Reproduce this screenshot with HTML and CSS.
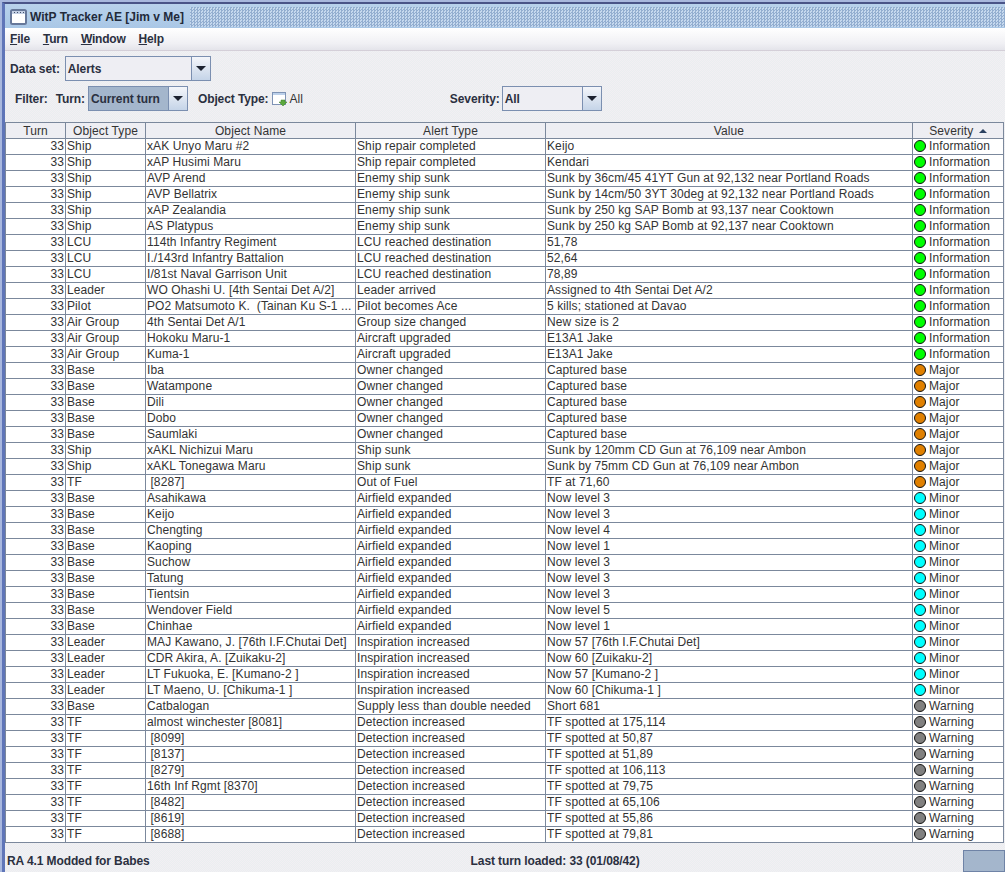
FILE: index.html
```html
<!DOCTYPE html>
<html lang="en">
<head>
<meta charset="utf-8">
<title>WitP Tracker AE</title>
<link rel="stylesheet" href="styles.css">
</head>
<body>
<div class="window">
  <div class="titlebar">
    <svg class="appicon" width="17" height="16" viewBox="0 0 17 16"><rect x="1" y="1" width="15" height="14" rx="1.5" fill="#fff" stroke="#66789a" stroke-width="2"/><rect x="2" y="2" width="13" height="3" fill="#c4d0e4"/><path d="M4 3.5h1M7 3.5h1M10 3.5h1M13 3.5h1" stroke="#3f4d68"/></svg>
    <span class="titletext">WitP Tracker AE [Jim v Me]</span>
    <span class="titledots"></span>
  </div>
  <div class="menubar">
    <span class="menu"><u>F</u>ile</span>
    <span class="menu"><u>T</u>urn</span>
    <span class="menu"><u>W</u>indow</span>
    <span class="menu"><u>H</u>elp</span>
  </div>
  <div class="toolbar">
    <div class="row-a">
      <span class="label">Data set:</span>
      <div class="combo combo-data"><span class="combo-val">Alerts</span><span class="combo-btn"><i class="arrow"></i></span></div>
    </div>
    <div class="row-b">
      <span class="label filter">Filter:</span>
      <span class="label turn">Turn:</span>
      <div class="combo combo-turn"><span class="combo-val selected">Current turn</span><span class="combo-btn"><i class="arrow"></i></span></div>
      <span class="label otype">Object Type:</span>
      <svg class="typeicon" width="16" height="16" viewBox="0 0 16 16"><rect x=".5" y="1.5" width="13" height="12" fill="#fff" stroke="#7e93b5"/><rect x="1" y="2" width="12" height="2" fill="#bcd0ea"/><path d="M9 9h4v2h2l-4 4-4-4h2z" fill="#5aa83c" stroke="#3c7d28" stroke-width=".5"/></svg>
      <span class="plain">All</span>
      <span class="label sev">Severity:</span>
      <div class="combo combo-sev"><span class="combo-val">All</span><span class="combo-btn"><i class="arrow"></i></span></div>
    </div>
  </div>
  <div class="tablewrap">
    <table class="grid">
      <colgroup><col class="c1"><col class="c2"><col class="c3"><col class="c4"><col class="c5"><col class="c6"></colgroup>
      <thead><tr><th>Turn</th><th>Object Type</th><th>Object Name</th><th>Alert Type</th><th>Value</th><th>Severity <i class="sort"></i></th></tr></thead>
      <tbody>
<tr><td class="n">33</td><td>Ship</td><td>xAK Unyo Maru #2</td><td>Ship repair completed</td><td>Keijo</td><td><i class="dot info"></i>Information</td></tr>
<tr><td class="n">33</td><td>Ship</td><td>xAP Husimi Maru</td><td>Ship repair completed</td><td>Kendari</td><td><i class="dot info"></i>Information</td></tr>
<tr><td class="n">33</td><td>Ship</td><td>AVP Arend</td><td>Enemy ship sunk</td><td>Sunk by 36cm/45 41YT Gun at 92,132 near Portland Roads</td><td><i class="dot info"></i>Information</td></tr>
<tr><td class="n">33</td><td>Ship</td><td>AVP Bellatrix</td><td>Enemy ship sunk</td><td>Sunk by 14cm/50 3YT 30deg at 92,132 near Portland Roads</td><td><i class="dot info"></i>Information</td></tr>
<tr><td class="n">33</td><td>Ship</td><td>xAP Zealandia</td><td>Enemy ship sunk</td><td>Sunk by 250 kg SAP Bomb at 93,137 near Cooktown</td><td><i class="dot info"></i>Information</td></tr>
<tr><td class="n">33</td><td>Ship</td><td>AS Platypus</td><td>Enemy ship sunk</td><td>Sunk by 250 kg SAP Bomb at 92,137 near Cooktown</td><td><i class="dot info"></i>Information</td></tr>
<tr><td class="n">33</td><td>LCU</td><td>114th Infantry Regiment</td><td>LCU reached destination</td><td>51,78</td><td><i class="dot info"></i>Information</td></tr>
<tr><td class="n">33</td><td>LCU</td><td>I./143rd Infantry Battalion</td><td>LCU reached destination</td><td>52,64</td><td><i class="dot info"></i>Information</td></tr>
<tr><td class="n">33</td><td>LCU</td><td>I/81st Naval Garrison Unit</td><td>LCU reached destination</td><td>78,89</td><td><i class="dot info"></i>Information</td></tr>
<tr><td class="n">33</td><td>Leader</td><td>WO Ohashi U. [4th Sentai Det A/2]</td><td>Leader arrived</td><td>Assigned to 4th Sentai Det A/2</td><td><i class="dot info"></i>Information</td></tr>
<tr><td class="n">33</td><td>Pilot</td><td>PO2 Matsumoto K.&nbsp; (Tainan Ku S-1 ...</td><td>Pilot becomes Ace</td><td>5 kills; stationed at Davao</td><td><i class="dot info"></i>Information</td></tr>
<tr><td class="n">33</td><td>Air Group</td><td>4th Sentai Det A/1</td><td>Group size changed</td><td>New size is 2</td><td><i class="dot info"></i>Information</td></tr>
<tr><td class="n">33</td><td>Air Group</td><td>Hokoku Maru-1</td><td>Aircraft upgraded</td><td>E13A1 Jake</td><td><i class="dot info"></i>Information</td></tr>
<tr><td class="n">33</td><td>Air Group</td><td>Kuma-1</td><td>Aircraft upgraded</td><td>E13A1 Jake</td><td><i class="dot info"></i>Information</td></tr>
<tr><td class="n">33</td><td>Base</td><td>Iba</td><td>Owner changed</td><td>Captured base</td><td><i class="dot major"></i>Major</td></tr>
<tr><td class="n">33</td><td>Base</td><td>Watampone</td><td>Owner changed</td><td>Captured base</td><td><i class="dot major"></i>Major</td></tr>
<tr><td class="n">33</td><td>Base</td><td>Dili</td><td>Owner changed</td><td>Captured base</td><td><i class="dot major"></i>Major</td></tr>
<tr><td class="n">33</td><td>Base</td><td>Dobo</td><td>Owner changed</td><td>Captured base</td><td><i class="dot major"></i>Major</td></tr>
<tr><td class="n">33</td><td>Base</td><td>Saumlaki</td><td>Owner changed</td><td>Captured base</td><td><i class="dot major"></i>Major</td></tr>
<tr><td class="n">33</td><td>Ship</td><td>xAKL Nichizui Maru</td><td>Ship sunk</td><td>Sunk by 120mm CD Gun at 76,109 near Ambon</td><td><i class="dot major"></i>Major</td></tr>
<tr><td class="n">33</td><td>Ship</td><td>xAKL Tonegawa Maru</td><td>Ship sunk</td><td>Sunk by 75mm CD Gun at 76,109 near Ambon</td><td><i class="dot major"></i>Major</td></tr>
<tr><td class="n">33</td><td>TF</td><td>&nbsp;[8287]</td><td>Out of Fuel</td><td>TF at 71,60</td><td><i class="dot major"></i>Major</td></tr>
<tr><td class="n">33</td><td>Base</td><td>Asahikawa</td><td>Airfield expanded</td><td>Now level 3</td><td><i class="dot minor"></i>Minor</td></tr>
<tr><td class="n">33</td><td>Base</td><td>Keijo</td><td>Airfield expanded</td><td>Now level 3</td><td><i class="dot minor"></i>Minor</td></tr>
<tr><td class="n">33</td><td>Base</td><td>Chengting</td><td>Airfield expanded</td><td>Now level 4</td><td><i class="dot minor"></i>Minor</td></tr>
<tr><td class="n">33</td><td>Base</td><td>Kaoping</td><td>Airfield expanded</td><td>Now level 1</td><td><i class="dot minor"></i>Minor</td></tr>
<tr><td class="n">33</td><td>Base</td><td>Suchow</td><td>Airfield expanded</td><td>Now level 3</td><td><i class="dot minor"></i>Minor</td></tr>
<tr><td class="n">33</td><td>Base</td><td>Tatung</td><td>Airfield expanded</td><td>Now level 3</td><td><i class="dot minor"></i>Minor</td></tr>
<tr><td class="n">33</td><td>Base</td><td>Tientsin</td><td>Airfield expanded</td><td>Now level 3</td><td><i class="dot minor"></i>Minor</td></tr>
<tr><td class="n">33</td><td>Base</td><td>Wendover Field</td><td>Airfield expanded</td><td>Now level 5</td><td><i class="dot minor"></i>Minor</td></tr>
<tr><td class="n">33</td><td>Base</td><td>Chinhae</td><td>Airfield expanded</td><td>Now level 1</td><td><i class="dot minor"></i>Minor</td></tr>
<tr><td class="n">33</td><td>Leader</td><td>MAJ Kawano, J. [76th I.F.Chutai Det]</td><td>Inspiration increased</td><td>Now 57 [76th I.F.Chutai Det]</td><td><i class="dot minor"></i>Minor</td></tr>
<tr><td class="n">33</td><td>Leader</td><td>CDR Akira, A. [Zuikaku-2]</td><td>Inspiration increased</td><td>Now 60 [Zuikaku-2]</td><td><i class="dot minor"></i>Minor</td></tr>
<tr><td class="n">33</td><td>Leader</td><td>LT Fukuoka, E. [Kumano-2 ]</td><td>Inspiration increased</td><td>Now 57 [Kumano-2 ]</td><td><i class="dot minor"></i>Minor</td></tr>
<tr><td class="n">33</td><td>Leader</td><td>LT Maeno, U. [Chikuma-1 ]</td><td>Inspiration increased</td><td>Now 60 [Chikuma-1 ]</td><td><i class="dot minor"></i>Minor</td></tr>
<tr><td class="n">33</td><td>Base</td><td>Catbalogan</td><td>Supply less than double needed</td><td>Short 681</td><td><i class="dot warn"></i>Warning</td></tr>
<tr><td class="n">33</td><td>TF</td><td>almost winchester [8081]</td><td>Detection increased</td><td>TF spotted at 175,114</td><td><i class="dot warn"></i>Warning</td></tr>
<tr><td class="n">33</td><td>TF</td><td>&nbsp;[8099]</td><td>Detection increased</td><td>TF spotted at 50,87</td><td><i class="dot warn"></i>Warning</td></tr>
<tr><td class="n">33</td><td>TF</td><td>&nbsp;[8137]</td><td>Detection increased</td><td>TF spotted at 51,89</td><td><i class="dot warn"></i>Warning</td></tr>
<tr><td class="n">33</td><td>TF</td><td>&nbsp;[8279]</td><td>Detection increased</td><td>TF spotted at 106,113</td><td><i class="dot warn"></i>Warning</td></tr>
<tr><td class="n">33</td><td>TF</td><td>16th Inf Rgmt [8370]</td><td>Detection increased</td><td>TF spotted at 79,75</td><td><i class="dot warn"></i>Warning</td></tr>
<tr><td class="n">33</td><td>TF</td><td>&nbsp;[8482]</td><td>Detection increased</td><td>TF spotted at 65,106</td><td><i class="dot warn"></i>Warning</td></tr>
<tr><td class="n">33</td><td>TF</td><td>&nbsp;[8619]</td><td>Detection increased</td><td>TF spotted at 55,86</td><td><i class="dot warn"></i>Warning</td></tr>
<tr><td class="n">33</td><td>TF</td><td>&nbsp;[8688]</td><td>Detection increased</td><td>TF spotted at 79,81</td><td><i class="dot warn"></i>Warning</td></tr>
      </tbody>
    </table>
  </div>
  <div class="statusbar">
    <span class="status-left">RA 4.1 Modded for Babes</span>
    <span class="status-mid">Last turn loaded: 33 (01/08/42)</span>
    <span class="status-box"></span>
  </div>
</div>
</body>
</html>
```

FILE: styles.css
```css
* { box-sizing: border-box; }
html, body { margin: 0; padding: 0; height: 100%; overflow: hidden; }
body {
  font-family: "Liberation Sans", Arial, sans-serif;
  font-size: 12px;
  color: #333;
  background: #a9b8de;
  padding: 2px 0 0 2px;
}
.window {
  width: 1003px;
  height: 870px;
  display: flex;
  flex-direction: column;
  border-top: 2px solid #4a5488;
  border-left: 3px solid #5f75b8;
  background-color: #eeeef3;
  background-image: conic-gradient(#f3eef3 25%, #e9eff0 0 50%, #f3eef3 0 75%, #e9eff0 0);
  background-size: 2px 2px;
}
.titlebar {
  height: 24px;
  flex: none;
  display: flex;
  align-items: flex-end;
  padding: 0 0 1px 5px;
  background: linear-gradient(#b9d2ec, #a9c7e6);
}
.appicon { flex: none; margin-bottom: 2px; }
.titletext {
  font-weight: bold;
  font-size: 12px;
  line-height: 20px;
  margin-left: 3px;
  color: #222a3a;
  white-space: nowrap;
}
.titledots {
  flex: 1;
  height: 20px;
  margin-left: 6px;
  background-image: conic-gradient(#93aed0 25%, #c6d9ee 0 50%, #93aed0 0 75%, #c6d9ee 0);
  background-size: 3px 3px;
}
.menubar {
  height: 23px;
  flex: none;
  display: flex;
  align-items: center;
  gap: 13px;
  padding-left: 5px;
  border-bottom: 1px solid #d4cfd8;
  background-image: linear-gradient(#ffffff, #f0f0f4 70%, #e4e4ea);
}
.menu { font-weight: bold; color: #2b3040; letter-spacing: -0.2px; }
.toolbar {
  height: 71px;
  flex: none;
  padding-top: 5px;
}
.label { font-weight: bold; color: #2b3040; letter-spacing: -0.1px; }
.row-a { display: flex; align-items: center; gap: 5px; height: 25px; padding-left: 5px; }
.row-b { display: flex; align-items: center; height: 25px; margin-top: 5px; }
.filter { margin-left: 10px; }
.turn { margin-left: 8px; }
.otype { margin-left: 10px; }
.sev { margin-left: 147px; }
.typeicon { margin-left: 3px; margin-right: 2px; }
.plain { color: #333; }
.combo {
  height: 25px;
  display: flex;
  border: 1px solid #7b8fb0;
  background: #eeeef3;
  font-weight: bold;
  color: #2b3040;
  letter-spacing: -0.1px;
}
.combo-data { width: 146px; }
.combo-turn { width: 100px; margin-left: 3px; }
.combo-sev { width: 100px; margin-left: 2px; }
.combo-val { flex: 1; display: flex; align-items: center; padding-left: 2px; }
.combo-val.selected { background: #a4b6cc; }
.combo-btn {
  width: 19px;
  flex: none;
  display: flex;
  align-items: center;
  justify-content: center;
  border-left: 1px solid #7b8fb0;
  background: linear-gradient(#f4f6fa, #c5d4e8);
}
.arrow {
  width: 0; height: 0;
  border-left: 5px solid transparent;
  border-right: 5px solid transparent;
  border-top: 5px solid #1c2230;
}
.tablewrap {
  flex: none;
  height: 721px;
}
.grid {
  width: 998px;
  table-layout: fixed;
  border-collapse: collapse;
  border: 1px solid #7b889c;
  background: #fff;
}
.c1 { width: 60px; }
.c2 { width: 80px; }
.c3 { width: 210px; }
.c4 { width: 190px; }
.c5 { width: 367px; }
.c6 { width: 91px; }
th, td {
  height: 16px;
  padding: 0 1px;
  border: 1px solid #7b889c;
  font-size: 12px;
  line-height: 15px;
  letter-spacing: 0.1px;
  white-space: nowrap;
  overflow: hidden;
  font-weight: normal;
  text-align: left;
  color: #333;
}
th {
  text-align: center;
  background: #eeeef3;
  padding-top: 1px;
  line-height: 14px;
}
td.n { text-align: right; }
.sort {
  display: inline-block;
  width: 0; height: 0;
  margin-left: 2px;
  vertical-align: 2px;
  border-left: 4px solid transparent;
  border-right: 4px solid transparent;
  border-bottom: 4px solid #2b4060;
}
.dot {
  display: inline-block;
  width: 12px;
  height: 12px;
  border-radius: 50%;
  border: 1px solid #111;
  margin-right: 3px;
  vertical-align: -2px;
}
.info { background: #00ff00; }
.major { background: #e08000; }
.minor { background: #00ffff; }
.warn { background: #808080; }
.statusbar {
  flex: 1;
  display: flex;
  align-items: center;
  padding: 6px 0 0 2px;
  font-weight: bold;
  color: #2b3040;
  letter-spacing: -0.1px;
}
.status-mid { margin-left: 321px; }
.status-box {
  margin-left: auto;
  width: 42px;
  height: 22px;
  align-self: flex-end;
  background: #a4b6cc;
  border: 1px solid #6f83a6;
}
```
